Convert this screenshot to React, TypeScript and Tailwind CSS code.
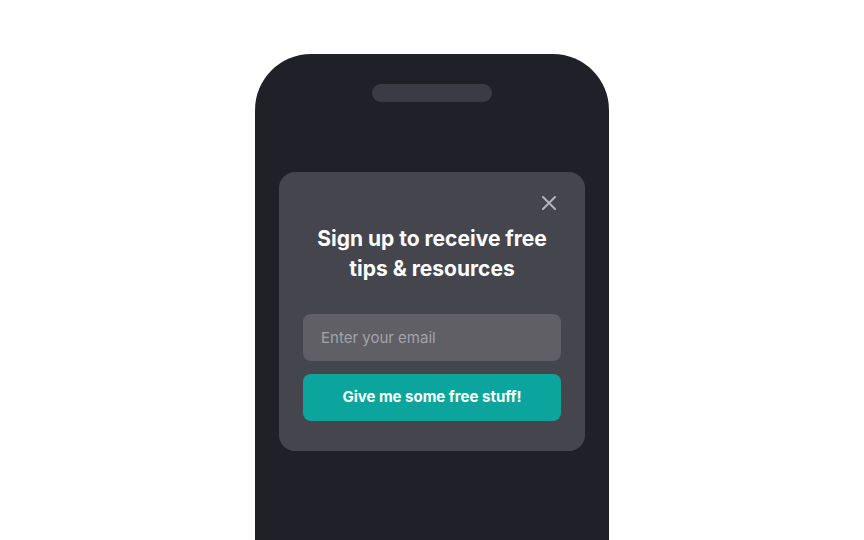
export default function App() {
  return (
    <div className="h-[540px] overflow-hidden bg-white" style={{ fontFamily: "Inter, 'Noto Sans', sans-serif" }}>
      <div className="mx-auto mt-[54px] h-[560px] w-[354px] rounded-t-[56px] bg-[#202028] pt-[30px]">
        <div className="mx-auto h-[18px] w-[120px] rounded-full bg-[#3b3b45]" />
        <div className="mx-[24px] mt-[70px] rounded-[16px] bg-[#45454d] px-[24px] pb-[30px] pt-[24px]">
          <div className="flex justify-end pr-[5px]">
            <svg width="14" height="14" viewBox="0 0 14 14" fill="none" stroke="#b4b4bb" strokeWidth="2" strokeLinecap="round">
              <path d="M1 1L13 13M13 1L1 13" />
            </svg>
          </div>
          <h2 className="mt-[14px] text-center text-[21px] font-bold leading-[30px] text-white">
            Sign up to receive free
            <br />
            tips &amp; resources
          </h2>
          <input
            type="email"
            placeholder="Enter your email"
            className="mt-[30px] block h-[47px] w-full rounded-[8px] bg-[#5f5f65] px-[18px] text-[15px] text-white outline-none placeholder:text-[#a3a3aa]"
          />
          <button className="mt-[13px] block h-[47px] w-full rounded-[8px] bg-[#0ca59e] text-[15px] font-bold text-white">
            Give me some free stuff!
          </button>
        </div>
      </div>
    </div>
  )
}
